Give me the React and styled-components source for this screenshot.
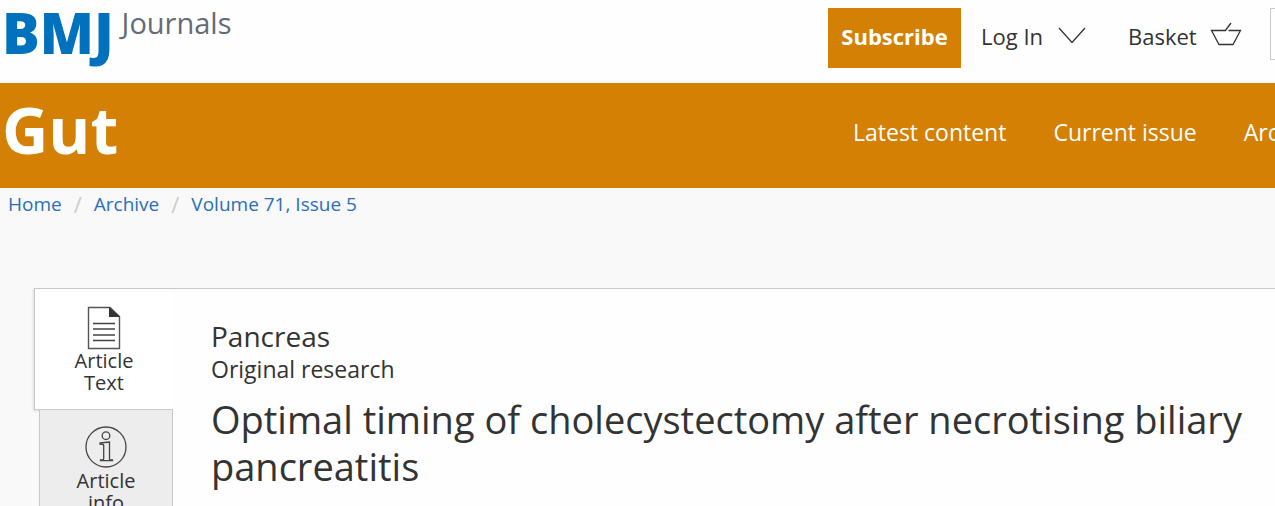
import styled, { createGlobalStyle } from "styled-components";

const App = () => {
  return (
    <Page>
      <GlobalStyle />
      <Header>
        <Brand href="#">
          <BrandName>BMJ</BrandName>
          <BrandSection>Journals</BrandSection>
        </Brand>
        <Actions>
          <SubscribeButton type="button">Subscribe</SubscribeButton>
          <LoginButton type="button">
            Log In
            <ChevronIcon />
          </LoginButton>
          <BasketLink href="#">
            Basket
            <BasketIcon />
          </BasketLink>
          <SearchInput type="search" aria-label="Search" />
        </Actions>
      </Header>

      <JournalBar>
        <JournalName href="#">Gut</JournalName>
        <JournalNav>
          <a href="#">Latest content</a>
          <a href="#">Current issue</a>
          <a href="#">Archive</a>
        </JournalNav>
      </JournalBar>

      <Breadcrumb aria-label="Breadcrumb">
        <a href="#">Home</a>
        <Separator />
        <a href="#">Archive</a>
        <Separator />
        <a href="#">Volume 71, Issue 5</a>
      </Breadcrumb>

      <Main>
        <Tabs>
          <Tab href="#" $active>
            <DocumentIcon />
            <span>Article Text</span>
          </Tab>
          <Tab href="#">
            <InfoIcon />
            <span>Article info</span>
          </Tab>
        </Tabs>
        <Article>
          <Topic>Pancreas</Topic>
          <Kind>Original research</Kind>
          <Title>
            Optimal timing of cholecystectomy after necrotising biliary
            pancreatitis
          </Title>
        </Article>
      </Main>
    </Page>
  );
};

const ChevronIcon = () => (
  <svg width="28" height="18" viewBox="0 0 28 18" aria-hidden="true">
    <path d="M1 1 L14 15.5 L27 1" fill="none" stroke="#333" strokeWidth="1.3" />
  </svg>
);

const BasketIcon = () => (
  <svg width="32" height="28" viewBox="0 0 32 28" aria-hidden="true">
    <path
      d="M15 8.5 H1.5 L9 22.5 H23 L30.5 8.5 H18.5 M15 9 L21 1"
      fill="none"
      stroke="#333"
      strokeWidth="1.3"
    />
  </svg>
);

const DocumentIcon = () => (
  <svg width="34" height="44" viewBox="0 0 34 44" aria-hidden="true">
    <path
      d="M1.5 1.5 H23 L32.5 10.5 V42.5 H1.5 Z"
      fill="none"
      stroke="#555"
      strokeWidth="1.4"
    />
    <path d="M22 1 L33 11 H22 Z" fill="#333" />
    <path
      d="M6 17.5 H28 M6 23 H28 M6 29 H28 M6 34.5 H28"
      stroke="#444"
      strokeWidth="1.5"
    />
  </svg>
);

const InfoIcon = () => (
  <svg width="42" height="44" viewBox="0 0 42 44" aria-hidden="true">
    <g fill="none" stroke="#444" strokeWidth="1.3">
      <circle cx="21" cy="21" r="20" />
      <circle cx="21" cy="9.7" r="3.8" />
      <path d="M15 17 L24.5 16 V33 Q24.5 34 27.5 34 V34.7 H15.5 V34 Q18.7 34 18.7 33 V19.5 Q18.7 18 15 18 Z" />
    </g>
  </svg>
);

export default App;

const GlobalStyle = createGlobalStyle`
  * {
    box-sizing: border-box;
  }

  body {
    margin: 0;
    background-color: #f9f9f9;
    color: #333;
    font-family: "Open Sans", "Noto Sans", sans-serif;
  }

  a {
    color: inherit;
    text-decoration: none;
  }

  button,
  input {
    font: inherit;
    color: inherit;
  }
`;

const Page = styled.div`
  height: 100vh;
  overflow: hidden;
`;

const Header = styled.header`
  display: flex;
  justify-content: space-between;
  height: 83px;
  padding-left: 2px;
  background-color: #fefefe;
`;

const Brand = styled.a`
  display: flex;
  align-items: flex-start;
  gap: 8px;
`;

const BrandName = styled.span`
  color: #0071bc;
  font-size: 56px;
  font-weight: 800;
  line-height: 64px;
`;

const BrandSection = styled.span`
  color: #646b75;
  font-size: 29px;
  line-height: 46px;
`;

const Actions = styled.div`
  display: flex;
  flex: 0 0 447px;
  align-items: center;
  height: 60px;
  margin-top: 8px;
  overflow: hidden;
  font-size: 22px;
`;

const SubscribeButton = styled.button`
  flex: 0 0 133px;
  height: 60px;
  padding: 0 0 4px;
  border: 0;
  background-color: #d38005;
  color: #fff;
  font-weight: 700;
`;

const LoginButton = styled.button`
  display: flex;
  flex: 0 0 105px;
  align-items: center;
  justify-content: space-between;
  margin-left: 20px;
  padding: 0 0 4px;
  border: 0;
  background: none;
`;

const BasketLink = styled.a`
  display: flex;
  flex: 0 0 114px;
  align-items: center;
  justify-content: space-between;
  margin-left: 42px;
  padding-bottom: 4px;
`;

const SearchInput = styled.input`
  flex: 0 0 240px;
  align-self: flex-start;
  height: 52px;
  margin-left: 28px;
  border: 1px solid #c8c8c8;
  background-color: #fff;
`;

const JournalBar = styled.div`
  display: flex;
  align-items: center;
  justify-content: space-between;
  height: 105px;
  padding: 0 0 8px 2px;
  background-color: #d38005;
  color: #fff;
`;

const JournalName = styled.a`
  padding-bottom: 4px;
  font-size: 64px;
  font-weight: 700;
  line-height: 88px;
`;

const JournalNav = styled.nav`
  display: flex;
  flex: 0 0 422px;
  gap: 47px;
  overflow: hidden;
  font-size: 23px;
  white-space: nowrap;
`;

const Breadcrumb = styled.nav`
  display: flex;
  align-items: center;
  height: 32px;
  padding-left: 8px;
  color: #2a6ebb;
  font-size: 19px;
`;

const Separator = styled.span`
  margin: 0 12px;
  color: #ccc;
  font-size: 22px;
  line-height: 32px;

  &::before {
    content: "/";
  }
`;

const Main = styled.main`
  display: flex;
  margin-top: 68px;
  padding-left: 34px;
`;

const Tabs = styled.nav`
  display: flex;
  flex: 0 0 139px;
  flex-direction: column;
  align-items: flex-end;
`;

const Tab = styled.a`
  display: flex;
  flex-direction: column;
  align-items: center;
  width: ${({ $active }) => ($active ? "139px" : "134px")};
  height: 122px;
  padding: ${({ $active }) => ($active ? "17px 34px 0" : "16px 34px 0")};
  border: 1px solid #c8c8c8;
  border-width: ${({ $active }) => ($active ? "1px 0 1px 1px" : "0 1px 0 1px")};
  background-color: ${({ $active }) => ($active ? "#fff" : "#ededed")};
  box-shadow: ${({ $active }) => ($active ? "-1px 1px 2px #ddd" : "none")};
  font-size: 20px;
  line-height: 22px;
  text-align: center;
`;

const Article = styled.article`
  flex: 1;
  min-height: 218px;
  padding: 28px 0 0 38px;
  border-top: 1px solid #c8c8c8;
  background-color: #fefefe;
`;

const Topic = styled.div`
  font-size: 28px;
  line-height: 38px;
`;

const Kind = styled.div`
  font-size: 23px;
  line-height: 28px;
`;

const Title = styled.h1`
  margin: 13px 0 0;
  font-size: 38px;
  font-weight: 400;
  line-height: 47px;
`;
